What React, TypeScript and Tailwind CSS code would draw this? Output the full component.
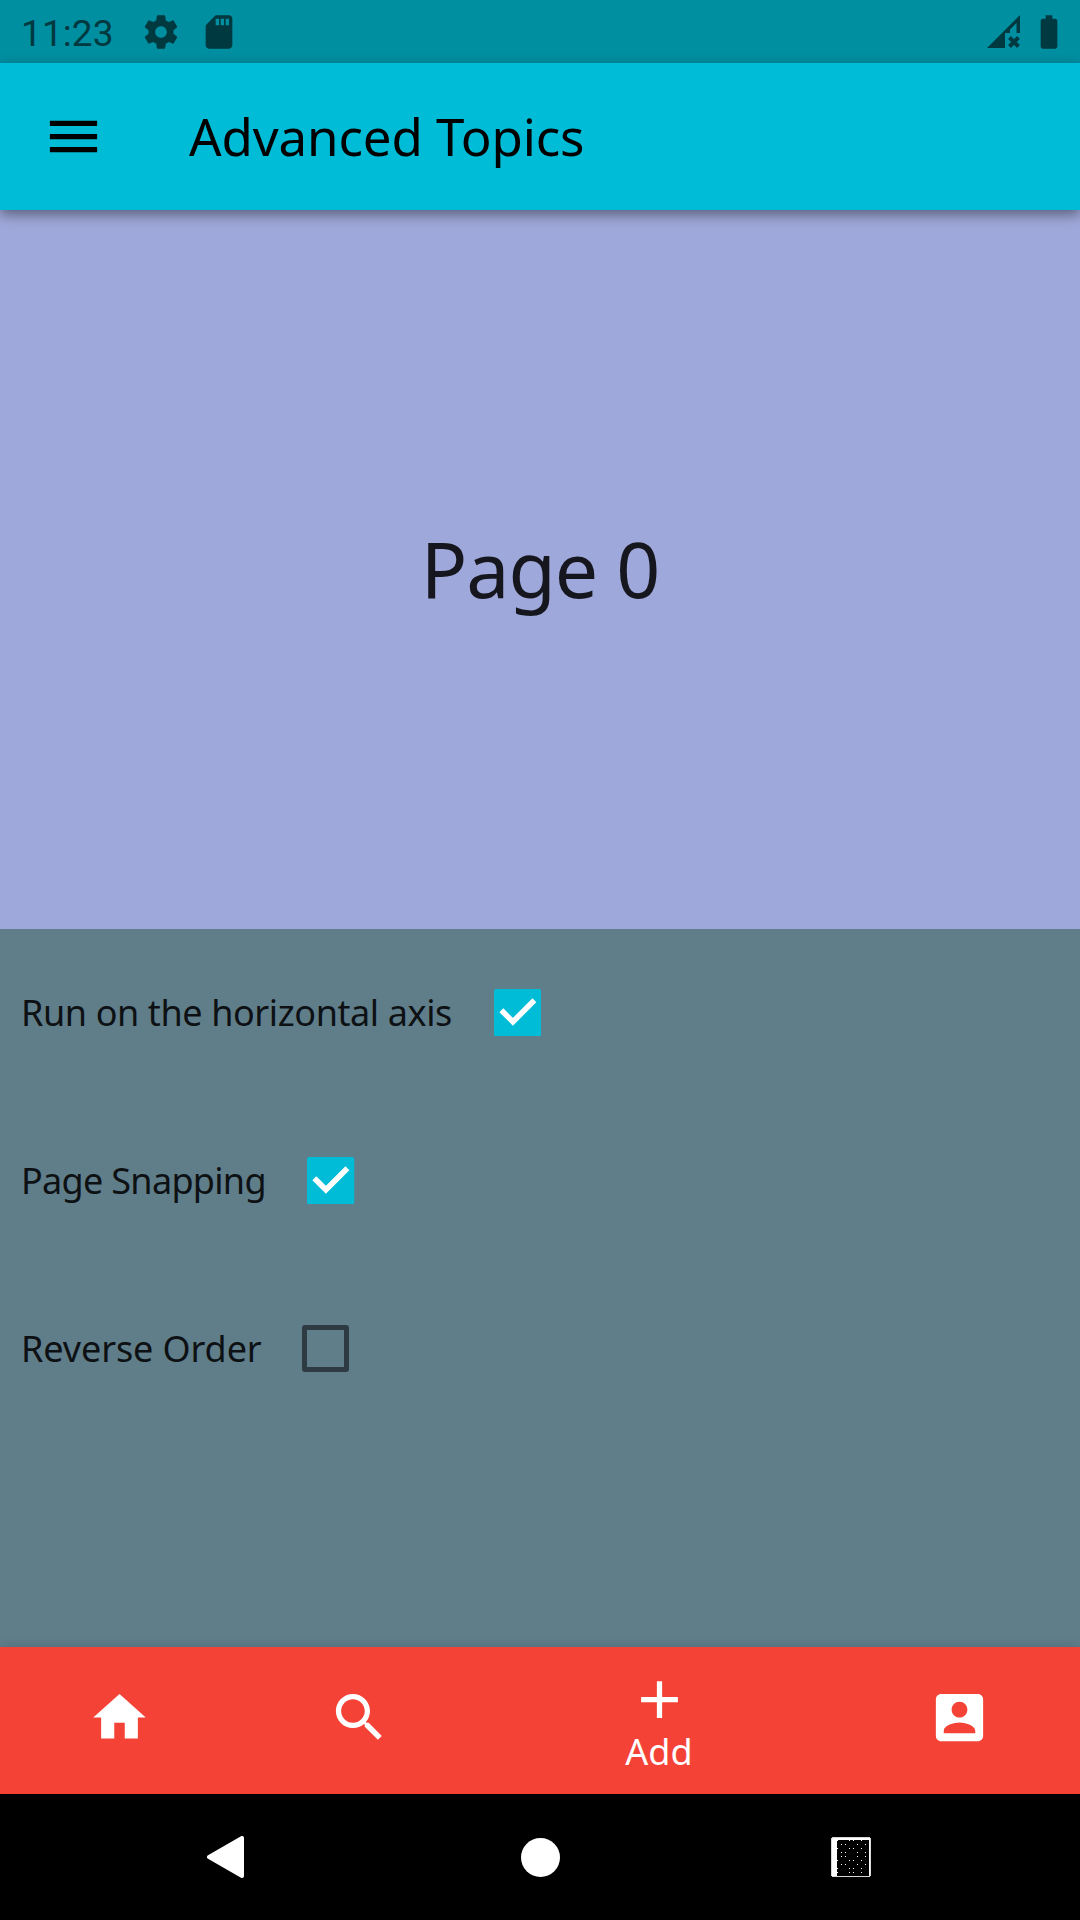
import React from "react";

const FONT = "font-['Noto_Sans',sans-serif]";

function Icon({ d, className }: { d: string; className: string }) {
  return (
    <svg viewBox="0 0 24 24" fill="currentColor" className={className}>
      <path d={d} />
    </svg>
  );
}

const GEAR =
  "M19.43 12.98c.04-.32.07-.64.07-.98s-.03-.66-.07-.98l2.11-1.65c.19-.15.24-.42.12-.64l-2-3.46c-.12-.22-.39-.3-.61-.22l-2.49 1c-.52-.4-1.08-.73-1.69-.98l-.38-2.65C14.46 2.18 14.25 2 14 2h-4c-.25 0-.46.18-.49.42l-.38 2.65c-.61.25-1.17.59-1.69.98l-2.49-1c-.23-.09-.49 0-.61.22l-2 3.46c-.13.22-.07.49.12.64l2.11 1.65c-.04.32-.07.65-.07.98s.03.66.07.98l-2.11 1.65c-.19.15-.24.42-.12.64l2 3.46c.12.22.39.3.61.22l2.49-1c.52.4 1.08.73 1.69.98l.38 2.65c.03.24.24.42.49.42h4c.25 0 .46-.18.49-.42l.38-2.65c.61-.25 1.17-.59 1.69-.98l2.49 1c.23.09.49 0 .61-.22l2-3.46c.12-.22.07-.49-.12-.64l-2.11-1.65zM12 15.5c-1.93 0-3.5-1.57-3.5-3.5s1.57-3.5 3.5-3.5 3.5 1.57 3.5 3.5-1.57 3.5-3.5 3.5z";
const SD = "M18 2h-8L4.02 8 4 20c0 1.1.9 2 2 2h12c1.1 0 2-.9 2-2V4c0-1.1-.9-2-2-2zm-6 6h-2V4h2v4zm3 0h-2V4h2v4zm3 0h-2V4h2v4z";
const BATTERY = "M15.67 4H14V2h-4v2H8.33C7.6 4 7 4.6 7 5.33v15.33C7 21.4 7.6 22 8.33 22h7.33c.74 0 1.34-.6 1.34-1.33V5.33C17 4.6 16.4 4 15.67 4z";
const HOME = "M10 20v-6h4v6h5v-8h3L12 3 2 12h3v8z";
const SEARCH =
  "M15.5 14h-.79l-.28-.27C15.41 12.59 16 11.11 16 9.5 16 5.91 13.09 3 9.5 3S3 5.91 3 9.5 5.91 16 9.5 16c1.61 0 3.09-.59 4.23-1.57l.27.28v.79l5 4.99L20.49 19l-4.99-5zm-6 0C7.01 14 5 11.99 5 9.5S7.01 5 9.5 5 14 7.01 14 9.5 11.99 14 9.5 14z";
const ADD = "M19 13h-6v6h-2v-6H5v-2h6V5h2v6h6v2z";
const ACCOUNT =
  "M3 5v14c0 1.1.89 2 2 2h14c1.1 0 2-.9 2-2V5c0-1.1-.9-2-2-2H5c-1.11 0-2 .9-2 2zm12 4c0 1.66-1.34 3-3 3s-3-1.34-3-3 1.34-3 3-3 3 1.34 3 3zm-9 8c0-2 4-3.1 6-3.1s6 1.1 6 3.1v1H6v-1z";

function StatusBar() {
  return (
    <div className="flex h-[63px] items-center bg-[#008ea1] text-[#003940]">
      <span className="ml-[21px] w-[123px] pt-[3px] font-[Roboto,sans-serif] text-[37px] leading-none tracking-[0.1px]">11:23</span>
      <Icon d={GEAR} className="-ml-[3px] size-[40px]" />
      <Icon d={SD} className="ml-[18px] size-[40px]" />
      <svg viewBox="0 0 33 33" className="mr-[9px] ml-auto h-[33px] w-[33px]" fill="currentColor">
        <path d="M0 33L33 0V18H29.5V8L23 14.5V18H18V33Z" />
        <path d="M22.5 22.5L31.5 31.5M31.5 22.5L22.5 31.5" stroke="currentColor" strokeWidth="4" />
      </svg>
      <Icon d={BATTERY} className="mr-[11px] size-[40px]" />
    </div>
  );
}

function Checkbox({ checked }: { checked: boolean }) {
  return (
    <span role="checkbox" aria-checked={checked} className="grid size-[126px] shrink-0 place-items-center">
      {checked ? (
        <svg viewBox="0 0 18 18" className="size-[47.25px]">
          <rect width="18" height="18" rx="0.8" fill="#00bcd7" />
          <path d="M2.8 8.1L7.2 12.5L15.4 4.3" fill="none" stroke="white" strokeWidth="2.1" />
        </svg>
      ) : (
        <span className="size-[47px] rounded-[3px] border-[5px] border-[#2f3b42]" />
      )}
    </span>
  );
}

function Option({ label, checked, className }: { label: string; checked: boolean; className: string }) {
  return (
    <label className="flex h-[168px] items-center pl-[21px]">
      <span className={`shrink-0 text-[36px] leading-none whitespace-nowrap text-[#0d1113] ${className}`}>{label}</span>
      <Checkbox checked={checked} />
    </label>
  );
}

const DOTS = [
  [0, 0], [3, 0], [4, 0], [6, 0], [1, 1], [2, 1], [5, 1], [7, 1], [0, 2], [3, 2], [4, 2], [6, 2],
  [1, 3], [2, 3], [5, 3], [7, 3], [1, 4], [2, 4], [5, 4], [7, 4], [0, 5], [3, 5], [4, 5], [6, 5],
  [1, 6], [2, 6], [5, 6], [7, 6], [0, 7], [3, 7], [4, 7], [6, 7], [0, 8], [3, 8], [4, 8], [6, 8],
];

function SystemNav() {
  return (
    <div className="flex h-[126px] items-center bg-black text-white">
      <svg viewBox="0 0 37 42" className="ml-[207px] h-[42px] w-[37px]" fill="currentColor">
        <path d="M2 21L35 2V40Z" stroke="currentColor" strokeWidth="4" strokeLinejoin="round" />
      </svg>
      <span className="ml-[276.5px] size-[39px] rounded-full bg-white" />
      <svg viewBox="0 0 40 40" className="ml-[271.5px] size-[40px]" shapeRendering="crispEdges">
        <rect width="40" height="40" rx="3" fill="#d8d8d8" />
        <rect x="1" y="1" width="38" height="38" rx="2" fill="white" />
        <rect x="6" y="3" width="32" height="36" fill="black" />
        {DOTS.map(([x, y]) => (
          <rect key={`${x}-${y}`} x={6 + x * 4} y={3 + y * 4} width="1" height="1" fill="white" />
        ))}
      </svg>
    </div>
  );
}

export default function App() {
  return (
    <div className={`flex h-[1920px] w-[1080px] flex-col overflow-hidden bg-[#607d8b] ${FONT}`}>
      <StatusBar />
      <header className="relative z-10 flex h-[147px] items-center bg-[#00bcd7] text-black shadow-[0_5px_12px_rgba(0,0,0,0.42)]">
        <Icon d="M3 18h18v-2H3v2zm0-5h18v-2H3v2zm0-7v2h18V6H3z" className="ml-[42px] size-[63px]" />
        <h1 className="ml-[84px] text-[51px] leading-none tracking-[-0.1px] whitespace-nowrap">Advanced Topics</h1>
      </header>
      <main className="flex h-[1437px] flex-col">
        <section className="flex h-[718.5px] items-center justify-center bg-[#9fa8da]">
          <p className="-mt-[1px] text-[77px] leading-none tracking-[-1px] whitespace-nowrap text-[#16171e]">Page 0</p>
        </section>
        <section className="h-[718.5px] bg-[#607d8a]">
          <Option label="Run on the horizontal axis" checked className="w-[433.5px] tracking-[-0.4px]" />
          <Option label="Page Snapping" checked className="w-[247px] tracking-[-0.7px]" />
          <Option label="Reverse Order" checked={false} className="w-[241.5px] tracking-[-0.1px]" />
        </section>
      </main>
      <nav className="flex h-[147px] bg-[#f44336] text-white shadow-[0_0_10px_rgba(0,0,0,0.15)]">
        <div className="flex w-[239px] justify-center pt-[38.5px]"><Icon d={HOME} className="size-[63px]" /></div>
        <div className="flex w-[240px] justify-center pt-[38.5px]"><Icon d={SEARCH} className="size-[63px]" /></div>
        <div className="flex w-[360px] flex-col items-center pt-[21px]">
          <Icon d={ADD} className="size-[63px]" />
          <span className="mt-[3px] text-[36px] leading-none">Add</span>
        </div>
        <div className="flex w-[240px] justify-center pt-[38.5px]"><Icon d={ACCOUNT} className="size-[63px]" /></div>
      </nav>
      <SystemNav />
    </div>
  );
}
